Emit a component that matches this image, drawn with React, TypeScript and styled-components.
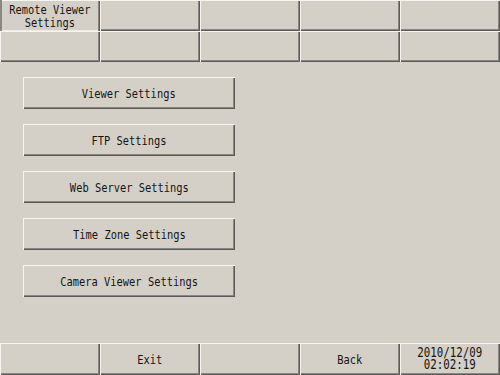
import React from 'react';
import styled, { createGlobalStyle, css } from 'styled-components';

const GlobalStyle = createGlobalStyle`
  html, body {
    margin: 0;
    padding: 0;
    background: #d4d0c8;
  }
  body {
    font-family: "DejaVu Sans Mono", "Liberation Mono", monospace;
    color: #141414;
  }
`;

const raised = css`
  background: #d4d0c8;
  box-shadow:
    inset 1px 1px 0 #f6f5f2,
    inset -1px -1px 0 #5a5a5a,
    inset -2px -2px 0 #8a8782;
`;

const Screen = styled.div`
  width: 500px;
  height: 375px;
  display: flex;
  flex-direction: column;
  background: #d4d0c8;
  overflow: hidden;
`;

const TabGrid = styled.div`
  display: grid;
  grid-template-columns: repeat(5, 100px);
  grid-template-rows: 31px 31px;
`;

const Tab = styled.div<{ $active?: boolean }>`
  ${raised}
  display: flex;
  align-items: center;
  justify-content: center;
  text-align: center;
  ${p =>
    p.$active &&
    css`
      box-shadow:
        inset 2px 0 0 #8a8782,
        inset 0 1px 0 #f6f5f2,
        inset -1px 0 0 #5a5a5a,
        inset -2px 0 0 #8a8782,
        inset 0 -1px 0 #ecebe7;
    `}
`;

const Label = styled.span`
  display: inline-block;
  font-size: 13px;
  line-height: 13px;
  white-space: pre;
  transform: scaleX(0.8);
`;

const Content = styled.div`
  flex: 1;
  display: flex;
  flex-direction: column;
  gap: 15px;
  padding: 15px 0 0 23px;
`;

const MenuButton = styled.button`
  ${raised}
  width: 212px;
  height: 32px;
  border: none;
  padding: 0;
  display: flex;
  align-items: center;
  justify-content: center;
  font-family: inherit;
  color: inherit;
  cursor: pointer;
`;

const BottomBar = styled.div`
  display: grid;
  grid-template-columns: repeat(5, 100px);
  height: 32px;
`;

const BarCell = styled.div`
  ${raised}
  display: flex;
  align-items: center;
  justify-content: center;
  text-align: center;
`;

const DateLabel = styled(Label)`
  line-height: 12px;
  font-size: 13.5px;
  margin-top: -3px;
`;

const menu = [
  'Viewer Settings',
  'FTP Settings',
  'Web Server Settings',
  'Time Zone Settings',
  'Camera Viewer Settings',
];

const App: React.FC = () => {
  return (
    <Screen>
      <GlobalStyle />
      <TabGrid>
        <Tab $active>
          <Label>{'Remote Viewer\nSettings'}</Label>
        </Tab>
        {Array.from({ length: 9 }).map((_, i) => (
          <Tab key={i} />
        ))}
      </TabGrid>

      <Content>
        {menu.map(item => (
          <MenuButton key={item}>
            <Label>{item}</Label>
          </MenuButton>
        ))}
      </Content>

      <BottomBar>
        <BarCell />
        <BarCell>
          <Label>Exit</Label>
        </BarCell>
        <BarCell />
        <BarCell>
          <Label>Back</Label>
        </BarCell>
        <BarCell>
          <DateLabel>{'2010/12/09\n02:02:19'}</DateLabel>
        </BarCell>
      </BottomBar>
    </Screen>
  );
};

export default App;
